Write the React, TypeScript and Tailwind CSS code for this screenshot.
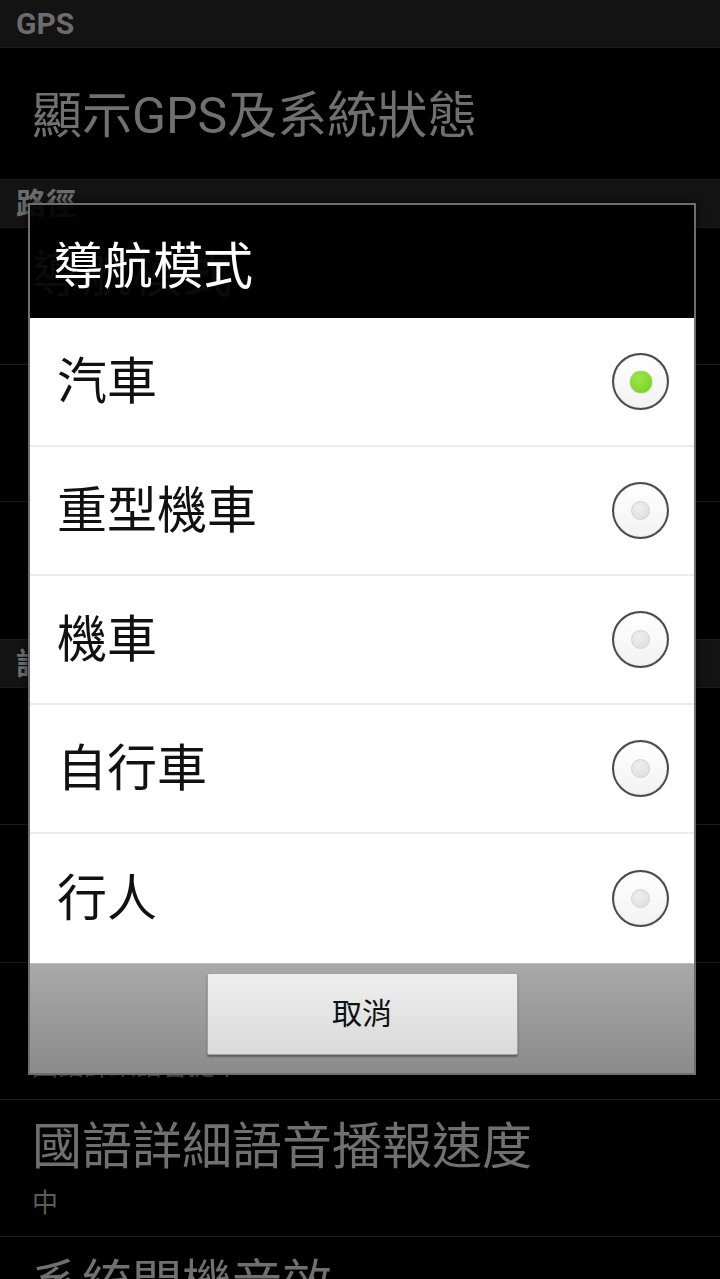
import React from "react";

const font = { fontFamily: 'Roboto, "Noto Sans CJK TC", "Noto Sans", sans-serif' };

function Header({ label }: { label: string }) {
  return (
    <div className="h-[48px] bg-[#131313] flex items-center pl-[16px] border-b border-[#1c1c1c]">
      <span className="text-[30px] font-bold leading-none text-[#6c6c6c]">{label}</span>
    </div>
  );
}

function Item({ title, sub, h }: { title: string; sub?: string; h: number }) {
  return (
    <div
      className="bg-black border-b border-[#1c1c1c] pl-[32px] flex flex-col"
      style={{ height: h }}
    >
      {sub ? (
        <>
          <div className="h-[50px] mt-[22px] flex items-center text-[50px] leading-none text-[#707070] whitespace-nowrap">
            {title}
          </div>
          <div className="h-[30px] mt-[16px] flex items-center text-[26px] leading-none text-[#5c5c5c] whitespace-nowrap">
            {sub}
          </div>
        </>
      ) : (
        <div className="flex-1 flex items-center pt-[4px] text-[50px] leading-none text-[#707070] whitespace-nowrap">
          {title}
        </div>
      )}
    </div>
  );
}

function Radio({ checked }: { checked: boolean }) {
  return (
    <div className="w-[57px] h-[57px] rounded-full border-[2px] border-[#4a4a4a] bg-gradient-to-b from-[#ffffff] to-[#f2f2f2] flex items-center justify-center shadow-[inset_0_0_1px_#999]">
      {checked ? (
        <div className="w-[22px] h-[22px] rounded-full bg-[radial-gradient(circle_at_40%_35%,#9be84a,#72cc1c)] shadow-[0_0_1px_#5a9a18]" />
      ) : (
        <div className="w-[19px] h-[19px] rounded-full bg-[radial-gradient(circle_at_40%_35%,#eeeeee,#dcdcdc)] border border-[#d2d2d2]" />
      )}
    </div>
  );
}

const options = ["汽車", "重型機車", "機車", "自行車", "行人"];

export default function App() {
  return (
    <div className="relative w-[720px] h-[1279px] overflow-hidden bg-black" style={font}>
      <Header label="GPS" />
      <Item title="顯示GPS及系統狀態" h={132} />
      <Header label="路徑" />
      <Item title="導航模式" sub="汽車" h={137} />
      <Item title="路徑規劃" sub="最快路徑" h={137} />
      <Item title="避開收費路段" sub="不避開" h={138} />
      <Header label="語音設定" />
      <Item title="語音提示" sub="開啟" h={137} />
      <Item title="語音音量" sub="中" h={138} />
      <Item title="語音類型" sub="國語詳細語音提示" h={137} />
      <Item title="國語詳細語音播報速度" sub="中" h={137} />
      <Item title="系統開機音效" sub="開啟" h={137} />

      {/* Dialog overlay */}
      <div className="absolute left-[28px] top-[203px] w-[668px] h-[872px] border-[2px] border-[#6e6e6e] flex flex-col shadow-[0_0_6px_rgba(0,0,0,0.8)]">
        <div className="h-[113px] bg-[rgba(0,0,0,0.9)] flex items-center pl-[23px] pt-[10px]">
          <span className="text-[50px] leading-none text-white">導航模式</span>
        </div>
        <div className="bg-white flex flex-col">
          {options.map((o, i) => (
            <div
              key={o}
              className={`h-[129px] flex items-center justify-between pl-[27px] pr-[25px] ${
                i < options.length - 1 ? "border-b-[2px] border-[#ececec]" : ""
              }`}
            >
              <span className="text-[50px] leading-none text-[#111111]">{o}</span>
              <Radio checked={i === 0} />
            </div>
          ))}
        </div>
        <div className="flex-1 bg-gradient-to-b from-[#a9a9a9] to-[#8b8b8b] border-t border-[#bdbdbd] flex justify-center pt-[9px]">
          <div className="w-[311px] h-[82px] rounded-[2px] bg-gradient-to-b from-[#eeeeee] to-[#dadada] border border-[#a0a0a0] shadow-[0_2px_2px_rgba(0,0,0,0.35)] flex items-center justify-center">
            <span className="text-[30px] leading-none text-[#111111]">取消</span>
          </div>
        </div>
      </div>
    </div>
  );
}
